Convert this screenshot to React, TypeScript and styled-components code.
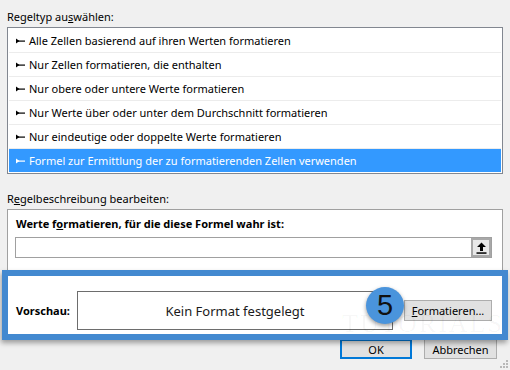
import styled, { createGlobalStyle } from 'styled-components'

const GlobalStyle = createGlobalStyle`
	html, body {
		margin: 0;
		padding: 0;
		background: #f0f0f0;
	}
`

const Dialog = styled.div`
	position: relative;
	width: 510px;
	height: 370px;
	box-sizing: border-box;
	padding: 9px 7px 0;
	background: #f0f0f0;
	font-family: 'Noto Sans', 'Open Sans', sans-serif;
	font-size: 11px;
	color: #000;
	overflow: hidden;
`

const SectionLabel = styled.div<{ $gap?: number }>`
	height: 18px;
	line-height: 16px;
	margin-top: ${(p) => p.$gap ?? 0}px;
`

const ListBox = styled.div`
	border: 1px solid #828790;
	background: #fff;
	padding: 1px;
`

const Row = styled.div<{ $selected?: boolean }>`
	display: flex;
	align-items: center;
	gap: 4px;
	height: 23px;
	padding-left: 7px;
	border-bottom: 1px solid #ececec;
	background: ${(p) => (p.$selected ? '#3399ff' : 'transparent')};
	color: ${(p) => (p.$selected ? '#fff' : '#000')};
	&:last-child {
		border-bottom: none;
	}
`

const DescBox = styled.div`
	border: 1px solid #a0a0a0;
	background: #fff;
	padding: 6px 0 6px;
`

const BoldLabel = styled.div`
	font-weight: bold;
	line-height: 16px;
	padding-left: 8px;
`

const FormulaField = styled.div`
	display: flex;
	height: 21px;
	box-sizing: border-box;
	margin: 5px 10px 0 7px;
	border: 1px solid #a0a0a0;
	background: #fff;
`

const FormulaInput = styled.div`
	flex: 1;
`

const PickButton = styled.div`
	width: 20px;
	box-sizing: border-box;
	border: 2px solid #a8a8a8;
	background: #e8e8e8;
	display: flex;
	align-items: center;
	justify-content: center;
`

const PreviewRow = styled.div`
	display: flex;
	align-items: center;
	margin-top: 33px;
	padding-left: 8px;
`

const PreviewLabel = styled.div`
	width: 61px;
	font-weight: bold;
`

const PreviewBox = styled.div`
	width: 316px;
	height: 39px;
	box-sizing: border-box;
	border: 1px solid #6d6d6d;
	display: flex;
	align-items: center;
	justify-content: center;
	font-size: 13px;
	color: #1a1a1a;
`

const Button = styled.div<{ $width: number; $default?: boolean }>`
	width: ${(p) => p.$width}px;
	height: 20px;
	box-sizing: border-box;
	border: ${(p) => (p.$default ? '2px solid #0078d7' : '1px solid #adadad')};
	background: #e1e1e1;
	display: flex;
	align-items: center;
	justify-content: center;
	color: #000;
`

const FormatButton = styled(Button)`
	height: 21px;
	margin-left: 11px;
`

const Footer = styled.div`
	display: flex;
	justify-content: flex-end;
	gap: 12px;
	margin-top: 2px;
	padding-right: 6px;
`

const Highlight = styled.div`
	position: absolute;
	left: 2px;
	top: 270px;
	width: 506px;
	height: 70px;
	box-sizing: border-box;
	border: 6px solid #4389d0;
	box-shadow: -1px 3px 5px rgba(0, 0, 0, 0.35);
	pointer-events: none;
`

const Badge = styled.div`
	position: absolute;
	left: 366px;
	top: 287px;
	width: 38px;
	height: 37px;
	border-radius: 50%;
	background: #4a94dc;
	box-shadow: 0 2px 4px rgba(0, 0, 0, 0.4);
	display: flex;
	align-items: center;
	justify-content: center;
	font-family: 'Liberation Sans', Arial, sans-serif;
	font-size: 29px;
	color: #111;
`

const Watermark = styled.div`
	position: absolute;
	left: 342px;
	top: 310px;
	font-family: 'Liberation Serif', serif;
	font-size: 26px;
	line-height: 28px;
	letter-spacing: 2px;
	color: rgba(0, 0, 0, 0.04);
	pointer-events: none;
`

const Grip = styled.svg`
	position: absolute;
	right: 1px;
	bottom: 1px;
`

const Arrow = ({ color }: { color: string }) => (
	<svg width="9" height="6" viewBox="0 0 9 6">
		<path d="M0 0.5 L3.5 3 L0 5.5 Z" fill={color} />
		<rect x="2" y="2.5" width="7" height="1.2" fill={color} />
	</svg>
)

const rules = [
	'Alle Zellen basierend auf ihren Werten formatieren',
	'Nur Zellen formatieren, die enthalten',
	'Nur obere oder untere Werte formatieren',
	'Nur Werte über oder unter dem Durchschnitt formatieren',
	'Nur eindeutige oder doppelte Werte formatieren',
	'Formel zur Ermittlung der zu formatierenden Zellen verwenden',
]

export default function App() {
	return (
		<>
			<GlobalStyle />
			<Dialog>
				<SectionLabel>
					Regeltyp au<u>s</u>wählen:
				</SectionLabel>
				<ListBox>
					{rules.map((r, i) => {
						const selected = i === rules.length - 1
						return (
							<Row key={r} $selected={selected}>
								<Arrow color={selected ? '#fff' : '#000'} />
								{r}
							</Row>
						)
					})}
				</ListBox>
				<SectionLabel $gap={17}>
					R<u>e</u>gelbeschreibung bearbeiten:
				</SectionLabel>
				<DescBox>
					<BoldLabel>
						Werte f<u>o</u>rmatieren, für die diese Formel wahr ist:
					</BoldLabel>
					<FormulaField>
						<FormulaInput />
						<PickButton>
							<svg width="11" height="12" viewBox="0 0 11 12">
								<path d="M5.5 0.5 L10 5 L7 5 L7 9 L4 9 L4 5 L1 5 Z" fill="#000" />
								<rect x="0.5" y="10.3" width="10" height="1.5" fill="#000" />
							</svg>
						</PickButton>
					</FormulaField>
					<PreviewRow>
						<PreviewLabel>Vorschau:</PreviewLabel>
						<PreviewBox>Kein Format festgelegt</PreviewBox>
						<FormatButton $width={88}>
							<span>
								<u>F</u>ormatieren...
							</span>
						</FormatButton>
					</PreviewRow>
				</DescBox>
				<Footer>
					<Button $width={72} $default>
						OK
					</Button>
					<Button $width={73}>Abbrechen</Button>
				</Footer>
				<Watermark>TUTORIALS</Watermark>
				<Highlight />
				<Badge>5</Badge>
				<Grip width="10" height="10" viewBox="0 0 10 10">
					{[
						[7, 1],
						[7, 4],
						[4, 4],
						[7, 7],
						[4, 7],
						[1, 7],
					].map(([x, y]) => (
						<rect key={`${x}-${y}`} x={x} y={y} width="2" height="2" fill="#b8b8b8" />
					))}
				</Grip>
			</Dialog>
		</>
	)
}
